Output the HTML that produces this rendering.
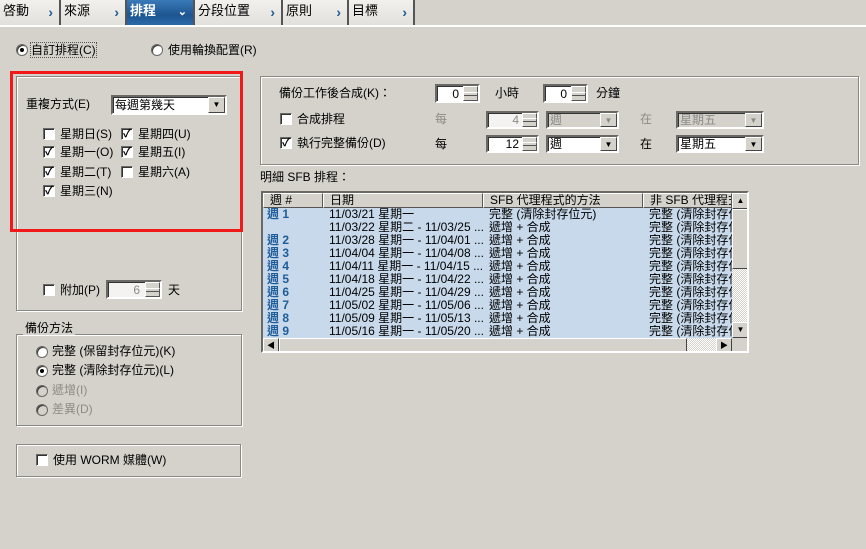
<!DOCTYPE html>
<html><head><meta charset="utf-8"><style>
*{margin:0;padding:0;box-sizing:border-box}
body{width:866px;height:549px;background:#d5d2cb;font-family:"Liberation Sans","Noto Sans CJK TC",sans-serif;font-size:12px;color:#000;position:relative;overflow:hidden}
.a{position:absolute;white-space:nowrap;line-height:14px}
.tab{position:absolute;top:0;height:25px;background:linear-gradient(#f2f1ee,#e2e0db);border-right:2px solid #555;font-size:13px;line-height:22px;padding-left:3px}
.tab .ar{position:absolute;right:6px;top:1px;color:#1b5c96;font-weight:bold;font-size:14px}
.sel{background:linear-gradient(#3a7ab8,#1d5590 60%,#2a6aa8);color:#fff;font-weight:bold}
.grp{position:absolute;border:1px solid #8a8883;box-shadow:1px 1px 0 #fff inset,1px 1px 0 #fff}
.cb{position:absolute;width:12px;height:12px;background:#fff;border:1px solid;border-color:#6b6966 #fff #fff #6b6966;box-shadow:inset 1px 1px 0 #333;font-size:11px;line-height:10px;text-align:center;font-weight:bold}
.rd{position:absolute;width:12px;height:12px;border-radius:50%;background:#fff;border:1px solid #6b6966;box-shadow:inset 1px 1px 0 #333}
.rd.on:after{content:"";position:absolute;left:3px;top:3px;width:4px;height:4px;border-radius:50%;background:#000}
.rd.dis{background:#d5d2cb}
.box{position:absolute;background:#fff;border:2px solid;border-color:#6b6966 #fff #fff #6b6966;box-shadow:inset 1px 1px 0 #333}
.spin{position:absolute;right:0;top:0;width:15px;height:100%;background:#d5d2cb}
.spin:before,.spin:after{content:"";position:absolute;left:0;right:0;height:50%;border:1px solid;border-color:#fff #555 #555 #fff}
.spin:before{top:0}.spin:after{bottom:0}
.dd{position:absolute;right:0;top:0;width:17px;height:100%;background:#d5d2cb;border:1px solid;border-color:#fff #444 #444 #fff;font-size:8px;text-align:center;line-height:14px}
.gray{color:#8d8b87}
.lst{position:absolute;left:261px;top:191px;width:488px;height:162px;border:2px solid;border-color:#6b6966 #fff #fff #6b6966;background:#d5d2cb;overflow:hidden}
.hd{position:absolute;top:0;height:15px;background:#d5d2cb;border:1px solid;border-color:#fff #555 #555 #fff;padding-left:6px;line-height:13px;white-space:nowrap;overflow:hidden}
.row{position:absolute;left:0;width:469px;height:13px;background:#c7d9ea;line-height:13px;white-space:nowrap;overflow:hidden}
.row span{position:absolute;top:0;white-space:nowrap}
.row span:last-child{width:83px;overflow:hidden}
.wk{font-weight:bold;color:#1f5c9a;left:4px}
</style></head><body>
<div style="position:absolute;left:0;top:25px;width:866px;height:2px;background:#fff"></div>
<div class="tab" style="left:0;width:61px">啓動<span class="ar">›</span></div>
<div class="tab" style="left:61px;width:66px">來源<span class="ar">›</span></div>
<div class="tab sel" style="left:127px;width:68px">排程<span class="ar" style="color:#fff;font-size:11px">⌄</span></div>
<div class="tab" style="left:195px;width:88px">分段位置<span class="ar">›</span></div>
<div class="tab" style="left:283px;width:66px">原則<span class="ar">›</span></div>
<div class="tab" style="left:349px;width:66px">目標<span class="ar">›</span></div>

<div class="rd on" style="left:16px;top:44px"></div>
<div class="a" style="left:31px;top:43px;outline:1px dotted #555">自訂排程(C)</div>
<div class="rd" style="left:151px;top:44px"></div>
<div class="a" style="left:168px;top:43px">使用輪換配置(R)</div>

<div class="grp" style="left:16px;top:76px;width:226px;height:235px"></div>
<div style="position:absolute;left:10px;top:71px;width:233px;height:161px;border:3px solid #f01818"></div>
<div class="a" style="left:26px;top:97px">重複方式(E)</div>
<div class="box" style="left:111px;top:95px;width:116px;height:20px"><span class="a" style="left:2px;top:1px">每週第幾天</span><div class="dd">▼</div></div>
<div class="cb" style="left:43px;top:128px"></div><div class="a" style="left:60px;top:127px">星期日(S)</div>
<div class="cb" style="left:121px;top:128px">✓</div><div class="a" style="left:138px;top:127px">星期四(U)</div>
<div class="cb" style="left:43px;top:146px">✓</div><div class="a" style="left:60px;top:145px">星期一(O)</div>
<div class="cb" style="left:121px;top:146px">✓</div><div class="a" style="left:138px;top:145px">星期五(I)</div>
<div class="cb" style="left:43px;top:166px">✓</div><div class="a" style="left:60px;top:165px">星期二(T)</div>
<div class="cb" style="left:121px;top:166px"></div><div class="a" style="left:138px;top:165px">星期六(A)</div>
<div class="cb" style="left:43px;top:185px">✓</div><div class="a" style="left:60px;top:184px">星期三(N)</div>

<div class="cb" style="left:43px;top:284px"></div><div class="a" style="left:60px;top:283px">附加(P)</div>
<div class="box" style="left:106px;top:280px;width:56px;height:19px;background:#f4f3f1"><span class="a gray" style="right:20px;top:1px">6</span><div class="spin"></div></div>
<div class="a" style="left:168px;top:283px">天</div>

<div class="grp" style="left:16px;top:334px;width:226px;height:92px"></div>
<div class="a" style="left:23px;top:321px;background:#d5d2cb;padding:0 2px">備份方法</div>
<div class="rd" style="left:36px;top:346px"></div><div class="a" style="left:52px;top:344px">完整 (保留封存位元)(K)</div>
<div class="rd on" style="left:36px;top:365px"></div><div class="a" style="left:52px;top:363px">完整 (清除封存位元)(L)</div>
<div class="rd dis" style="left:36px;top:385px"></div><div class="a gray" style="left:52px;top:383px">遞增(I)</div>
<div class="rd dis" style="left:36px;top:404px"></div><div class="a gray" style="left:52px;top:402px">差異(D)</div>

<div class="grp" style="left:16px;top:444px;width:225px;height:33px"></div>
<div class="cb" style="left:36px;top:454px"></div><div class="a" style="left:53px;top:453px">使用 WORM 媒體(W)</div>

<div class="grp" style="left:260px;top:76px;width:599px;height:89px"></div>
<div class="a" style="left:279px;top:86px">備份工作後合成(K)：</div>
<div class="box" style="left:435px;top:84px;width:45px;height:19px"><span class="a" style="right:19px;top:1px">0</span><div class="spin"></div></div>
<div class="a" style="left:495px;top:86px">小時</div>
<div class="box" style="left:543px;top:84px;width:45px;height:19px"><span class="a" style="right:19px;top:1px">0</span><div class="spin"></div></div>
<div class="a" style="left:596px;top:86px">分鐘</div>

<div class="cb" style="left:280px;top:113px"></div><div class="a" style="left:297px;top:112px">合成排程</div>
<div class="a gray" style="left:435px;top:112px">每</div>
<div class="box" style="left:486px;top:111px;width:53px;height:18px;background:#f4f3f1"><span class="a gray" style="right:18px;top:0">4</span><div class="spin"></div></div>
<div class="box" style="left:546px;top:111px;width:73px;height:18px;background:#d5d2cb"><span class="a gray" style="left:2px;top:0">週</span><div class="dd gray">▼</div></div>
<div class="a gray" style="left:640px;top:112px">在</div>
<div class="box" style="left:676px;top:111px;width:88px;height:18px;background:#d5d2cb"><span class="a gray" style="left:2px;top:0">星期五</span><div class="dd gray">▼</div></div>

<div class="cb" style="left:280px;top:137px">✓</div><div class="a" style="left:297px;top:136px">執行完整備份(D)</div>
<div class="a" style="left:435px;top:137px">每</div>
<div class="box" style="left:486px;top:135px;width:53px;height:18px"><span class="a" style="right:18px;top:0">12</span><div class="spin"></div></div>
<div class="box" style="left:546px;top:135px;width:73px;height:18px"><span class="a" style="left:2px;top:0">週</span><div class="dd">▼</div></div>
<div class="a" style="left:640px;top:137px">在</div>
<div class="box" style="left:676px;top:135px;width:88px;height:18px"><span class="a" style="left:2px;top:0">星期五</span><div class="dd">▼</div></div>

<div class="a" style="left:260px;top:170px">明細 SFB 排程：</div>
<div class="lst">
<div class="hd" style="left:0;width:60px">週 #</div>
<div class="hd" style="left:60px;width:160px">日期</div>
<div class="hd" style="left:220px;width:160px">SFB 代理程式的方法</div>
<div class="hd" style="left:380px;width:89px">非 SFB 代理程式的方法</div>
<div style="position:absolute;left:469px;top:0;width:17px;height:145px;background:repeating-conic-gradient(#fff 0 25%,#d5d2cb 0 50%) 0 0/2px 2px"></div>
<div style="position:absolute;left:469px;top:0;width:17px;height:16px;background:#d5d2cb;border:1px solid;border-color:#fff #444 #444 #fff;font-size:8px;text-align:center;line-height:14px">▲</div>
<div style="position:absolute;left:469px;top:16px;width:17px;height:60px;background:#d5d2cb;border:1px solid;border-color:#fff #444 #444 #fff"></div>
<div style="position:absolute;left:469px;top:129px;width:17px;height:16px;background:#d5d2cb;border:1px solid;border-color:#fff #444 #444 #fff;font-size:8px;text-align:center;line-height:14px">▼</div>
<div style="position:absolute;left:0;top:145px;width:469px;height:15px;background:repeating-conic-gradient(#fff 0 25%,#d5d2cb 0 50%) 0 0/2px 2px"></div>
<div style="position:absolute;left:0;top:145px;width:16px;height:15px;background:#d5d2cb;border:1px solid;border-color:#fff #444 #444 #fff;font-size:8px;text-align:center;line-height:13px">◀</div>
<div style="position:absolute;left:16px;top:145px;width:408px;height:15px;background:#d5d2cb;border:1px solid;border-color:#fff #444 #444 #fff"></div>
<div style="position:absolute;left:453px;top:145px;width:16px;height:15px;background:#d5d2cb;border:1px solid;border-color:#fff #444 #444 #fff;font-size:8px;text-align:center;line-height:13px">▶</div>
<div class="row" style="top:15px"><span class="wk">週 1</span><span style="left:66px">11/03/21 星期一</span><span style="left:226px">完整 (清除封存位元)</span><span style="left:386px">完整 (清除封存位元)</span></div>
<div class="row" style="top:28px"><span style="left:66px">11/03/22 星期二 - 11/03/25 ...</span><span style="left:226px">遞增 + 合成</span><span style="left:386px">完整 (清除封存位元)</span></div>
<div class="row" style="top:41px"><span class="wk">週 2</span><span style="left:66px">11/03/28 星期一 - 11/04/01 ...</span><span style="left:226px">遞增 + 合成</span><span style="left:386px">完整 (清除封存位元)</span></div>
<div class="row" style="top:54px"><span class="wk">週 3</span><span style="left:66px">11/04/04 星期一 - 11/04/08 ...</span><span style="left:226px">遞增 + 合成</span><span style="left:386px">完整 (清除封存位元)</span></div>
<div class="row" style="top:67px"><span class="wk">週 4</span><span style="left:66px">11/04/11 星期一 - 11/04/15 ...</span><span style="left:226px">遞增 + 合成</span><span style="left:386px">完整 (清除封存位元)</span></div>
<div class="row" style="top:80px"><span class="wk">週 5</span><span style="left:66px">11/04/18 星期一 - 11/04/22 ...</span><span style="left:226px">遞增 + 合成</span><span style="left:386px">完整 (清除封存位元)</span></div>
<div class="row" style="top:93px"><span class="wk">週 6</span><span style="left:66px">11/04/25 星期一 - 11/04/29 ...</span><span style="left:226px">遞增 + 合成</span><span style="left:386px">完整 (清除封存位元)</span></div>
<div class="row" style="top:106px"><span class="wk">週 7</span><span style="left:66px">11/05/02 星期一 - 11/05/06 ...</span><span style="left:226px">遞增 + 合成</span><span style="left:386px">完整 (清除封存位元)</span></div>
<div class="row" style="top:119px"><span class="wk">週 8</span><span style="left:66px">11/05/09 星期一 - 11/05/13 ...</span><span style="left:226px">遞增 + 合成</span><span style="left:386px">完整 (清除封存位元)</span></div>
<div class="row" style="top:132px"><span class="wk">週 9</span><span style="left:66px">11/05/16 星期一 - 11/05/20 ...</span><span style="left:226px">遞增 + 合成</span><span style="left:386px">完整 (清除封存位元)</span></div>
</div>
</body></html>
